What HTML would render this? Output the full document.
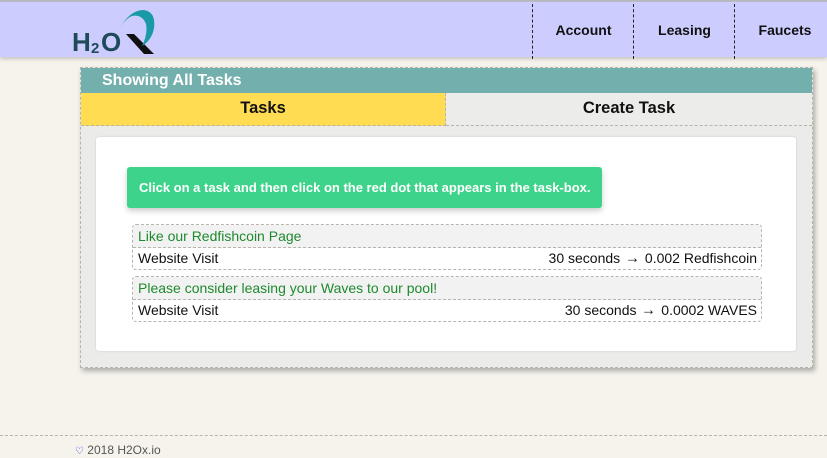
<!DOCTYPE html><html><head><style>
body{margin:0;width:827px;height:458px;background:#f6f3ec;font-family:"Liberation Sans",sans-serif;position:relative;overflow:hidden}
.hdr{position:absolute;left:0;top:0;width:827px;height:57px;background:#ccccfe;border-top:2px solid #b8b8c0;box-sizing:border-box;box-shadow:0 2px 4px rgba(0,0,0,.2)}
.nav{position:absolute;top:2px;height:55px;border-left:1px dashed #222;font-weight:bold;font-size:14px;color:#111;line-height:53px;text-align:center;width:101px}
.panel{position:absolute;left:80px;top:67px;width:731px;height:299px;border:1px dashed #b5b5ad;background:#ebebe9;box-shadow:2px 3px 5px rgba(0,0,0,.3)}
.title{height:25px;background:#73afac;color:#fff;font-weight:bold;font-size:16px;line-height:26px;padding-left:21px}
.tab{position:absolute;top:25px;height:33px;line-height:31px;font-weight:bold;font-size:16.5px;text-align:center;color:#111;box-sizing:border-box;border-bottom:1px dashed #b5b5ad}
.card{position:absolute;left:15px;top:69px;width:700px;height:214px;background:#fff;border-radius:3px;box-shadow:0 0 2px rgba(0,0,0,.15)}
.ban{position:absolute;left:31px;top:30px;width:475px;height:41px;background:#3ed38a;border-radius:3px;color:#fff;font-weight:bold;font-size:13px;line-height:41px;padding-left:12px;box-sizing:border-box;box-shadow:0 3px 6px rgba(0,0,0,.2)}
.task{position:absolute;left:36px;width:628px;border:1px dashed #b5b5ad;border-radius:4px;font-size:14px;overflow:hidden}
.th{background:#f2f2f2;color:#1e8a2e;height:22px;line-height:22px;padding-left:5px;border-bottom:1px dashed #b5b5ad}
.tr{height:21px;line-height:21px;padding:0 4px 0 5px;color:#111;display:flex;justify-content:space-between}
.ar{display:inline-block;font-size:17px;line-height:14px;transform:scaleX(0.85)}
</style></head><body>
<div class="hdr">
<svg style="position:absolute;left:70px;top:2px" width="90" height="52" viewBox="0 0 90 52">
<path d="M56 30 L64 30 L84 50 L74 50 Z" fill="#111"/>
<text x="2" y="47" font-family="Liberation Sans" font-weight="bold" font-size="26" fill="#1e4a5a">H</text>
<text x="21" y="49" font-family="Liberation Sans" font-weight="bold" font-size="15" fill="#1e4a5a">2</text>
<text x="31" y="47" font-family="Liberation Sans" font-weight="bold" font-size="26" fill="#1e4a5a">O</text>
<path d="M50 24 Q60 6 74 6 Q86 8 84 24 Q82 36 72 42 Q78 30 76 20 Q72 10 62 12 Q55 15 50 24Z" fill="#1a9aa6"/>
</svg>
<div class="nav" style="left:532px">Account</div>
<div class="nav" style="left:633px">Leasing</div>
<div class="nav" style="left:734px;width:100px">Faucets</div>
</div>
<div class="panel">
<div class="title">Showing All Tasks</div>
<div class="tab" style="left:0;width:365px;background:#ffdc52;border-right:1px dashed #b5b5ad">Tasks</div>
<div class="tab" style="left:365px;width:366px;background:#ececea">Create Task</div>
<div class="card">
<div class="ban">Click on a task and then click on the red dot that appears in the task-box.</div>
<div class="task" style="top:87px"><div class="th">Like our Redfishcoin Page</div><div class="tr"><span>Website Visit</span><span>30 seconds <span class="ar">→</span> 0.002 Redfishcoin</span></div></div>
<div class="task" style="top:139px"><div class="th">Please consider leasing your Waves to our pool!</div><div class="tr"><span>Website Visit</span><span>30 seconds <span class="ar">→</span> 0.0002 WAVES</span></div></div>
</div>
</div>
<div style="position:absolute;left:0;top:435px;width:827px;border-top:1px dashed #b5b5ad"></div>
<div style="position:absolute;left:75px;top:443px;font-size:12px;color:#555"><span style="color:#33f;font-size:10px">♡</span> 2018 H2Ox.io</div>
</body></html>
